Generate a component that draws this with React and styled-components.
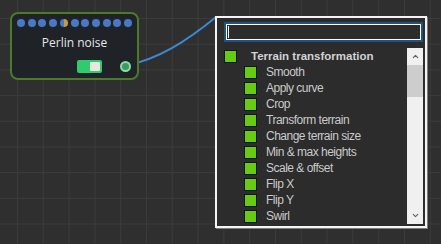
import React from 'react';
import styled, { createGlobalStyle } from 'styled-components';
import { ChevronUp, ChevronDown } from 'lucide-react';

const GlobalStyle = createGlobalStyle`
    html, body {
        margin: 0;
        padding: 0;
        background: #2f2f2f;
    }
    * {
        box-sizing: border-box;
    }
`;

const Canvas = styled.div`
    position: relative;
    width: 441px;
    height: 244px;
    overflow: hidden;
    background-color: #2f2f2f;
    background-image:
        linear-gradient(to right, #3b3b3b 1px, transparent 1px),
        linear-gradient(to bottom, #3b3b3b 1px, transparent 1px);
    background-size: 25.8px 25.7px;
    background-position: 17px 18px;
`;

const Wire = styled.svg`
    position: absolute;
    left: 0;
    top: 0;
`;

const Node = styled.div`
    position: absolute;
    left: 10px;
    top: 12px;
    width: 129px;
    height: 68px;
    border: 2px solid #4b7b2a;
    border-radius: 8px;
    background: #1f2226;
    display: flex;
    flex-direction: column;
    align-items: center;
    padding-top: 5px;
`;

const Dots = styled.div`
    display: flex;
    gap: 2.7px;
`;

const Dot = styled.span`
    width: 8px;
    height: 8px;
    border-radius: 50%;
    background: ${p => p.$split
        ? 'linear-gradient(to right, #4a78c8 50%, #c79a3c 50%)'
        : '#4a78c8'};
`;

const Title = styled.div`
    margin-top: 9px;
    font-family: "Open Sans", sans-serif;
    font-size: 12px;
    color: #e6e6e6;
    line-height: 14px;
`;

const Footer = styled.div`
    align-self: stretch;
    display: flex;
    align-items: center;
    justify-content: flex-end;
    gap: 18px;
    padding-right: 6px;
    margin-top: 10px;
`;

const Toggle = styled.div`
    width: 25px;
    height: 13px;
    border-radius: 2px;
    background: #2fcb6e;
    display: flex;
    justify-content: flex-end;
    align-items: center;
    padding-right: 2px;
`;

const Knob = styled.span`
    width: 10px;
    height: 9px;
    border-radius: 1px;
    background: #ebe5df;
`;

const Port = styled.span`
    width: 11px;
    height: 11px;
    border-radius: 50%;
    border: 2px solid #8fdcab;
    background: #3b9a5c;
    margin-top: -1px;
`;

const Popup = styled.div`
    position: absolute;
    left: 215px;
    top: 16px;
    width: 212px;
    height: 212px;
    border: 2px solid #f4f4f4;
    box-shadow: 1px 1px 0 #7d7d7d;
    background: #2c2c2c;
    padding: 4px 2px 0 7px;
    display: flex;
    flex-direction: column;
`;

const Search = styled.div`
    height: 20px;
    border: 2px solid #1c5485;
    box-shadow: inset 0 0 0 1px #ffffff;
    background: #2c2c2c;
    display: flex;
    align-items: center;
    padding-left: 2px;
`;

const Caret = styled.span`
    width: 1px;
    height: 12px;
    background: #f0f0f0;
`;

const ListBox = styled.div`
    margin-top: 6px;
    height: 176px;
    display: flex;
`;

const Rows = styled.div`
    flex: 1;
    display: flex;
    flex-direction: column;
`;

const Row = styled.div`
    height: 16px;
    display: flex;
    align-items: center;
    padding-left: ${p => (p.$header ? 0 : 20)}px;
    font-family: "Liberation Sans", Arial, sans-serif;
    font-size: ${p => (p.$header ? 11.5 : 12)}px;
    font-weight: ${p => (p.$header ? 700 : 400)};
    letter-spacing: ${p => (p.$header ? 0 : -0.5)}px;
    color: ${p => (p.$header ? '#d2d2d2' : '#cacaca')};
    white-space: nowrap;
`;

const Swatch = styled.span`
    width: 13px;
    height: 13px;
    flex: none;
    background: #67cb12;
    border: 1px solid #161616;
    margin-right: ${p => (p.$header ? 14 : 9)}px;
`;

const Scrollbar = styled.div`
    width: 16px;
    background: #f0f0f0;
    display: flex;
    flex-direction: column;
`;

const Arrow = styled.div`
    height: 17px;
    display: flex;
    align-items: center;
    justify-content: center;
    color: #606060;
`;

const Thumb = styled.div`
    height: 32px;
    background: #cdcdcd;
`;

const Track = styled.div`
    flex: 1;
`;

const items = [
    'Smooth',
    'Apply curve',
    'Crop',
    'Transform terrain',
    'Change terrain size',
    'Min & max heights',
    'Scale & offset',
    'Flip X',
    'Flip Y',
    'Swirl',
];

export default function App() {
    return (
        <Canvas>
            <GlobalStyle />
            <Wire width="441" height="244">
                <path d="M124 66 C 158 60, 188 40, 216 17" stroke="#3a89d2" strokeWidth="2" fill="none" />
            </Wire>
            <Node>
                <Dots>
                    {Array.from({ length: 11 }).map((_, i) => (
                        <Dot key={i} $split={i === 4} />
                    ))}
                </Dots>
                <Title>Perlin noise</Title>
                <Footer>
                    <Toggle><Knob /></Toggle>
                    <Port />
                </Footer>
            </Node>
            <Popup>
                <Search><Caret /></Search>
                <ListBox>
                    <Rows>
                        <Row $header><Swatch $header />Terrain transformation</Row>
                        {items.map(name => (
                            <Row key={name}><Swatch />{name}</Row>
                        ))}
                    </Rows>
                    <Scrollbar>
                        <Arrow><ChevronUp size={9} strokeWidth={3} /></Arrow>
                        <Thumb />
                        <Track />
                        <Arrow><ChevronDown size={9} strokeWidth={3} /></Arrow>
                    </Scrollbar>
                </ListBox>
            </Popup>
        </Canvas>
    );
}
